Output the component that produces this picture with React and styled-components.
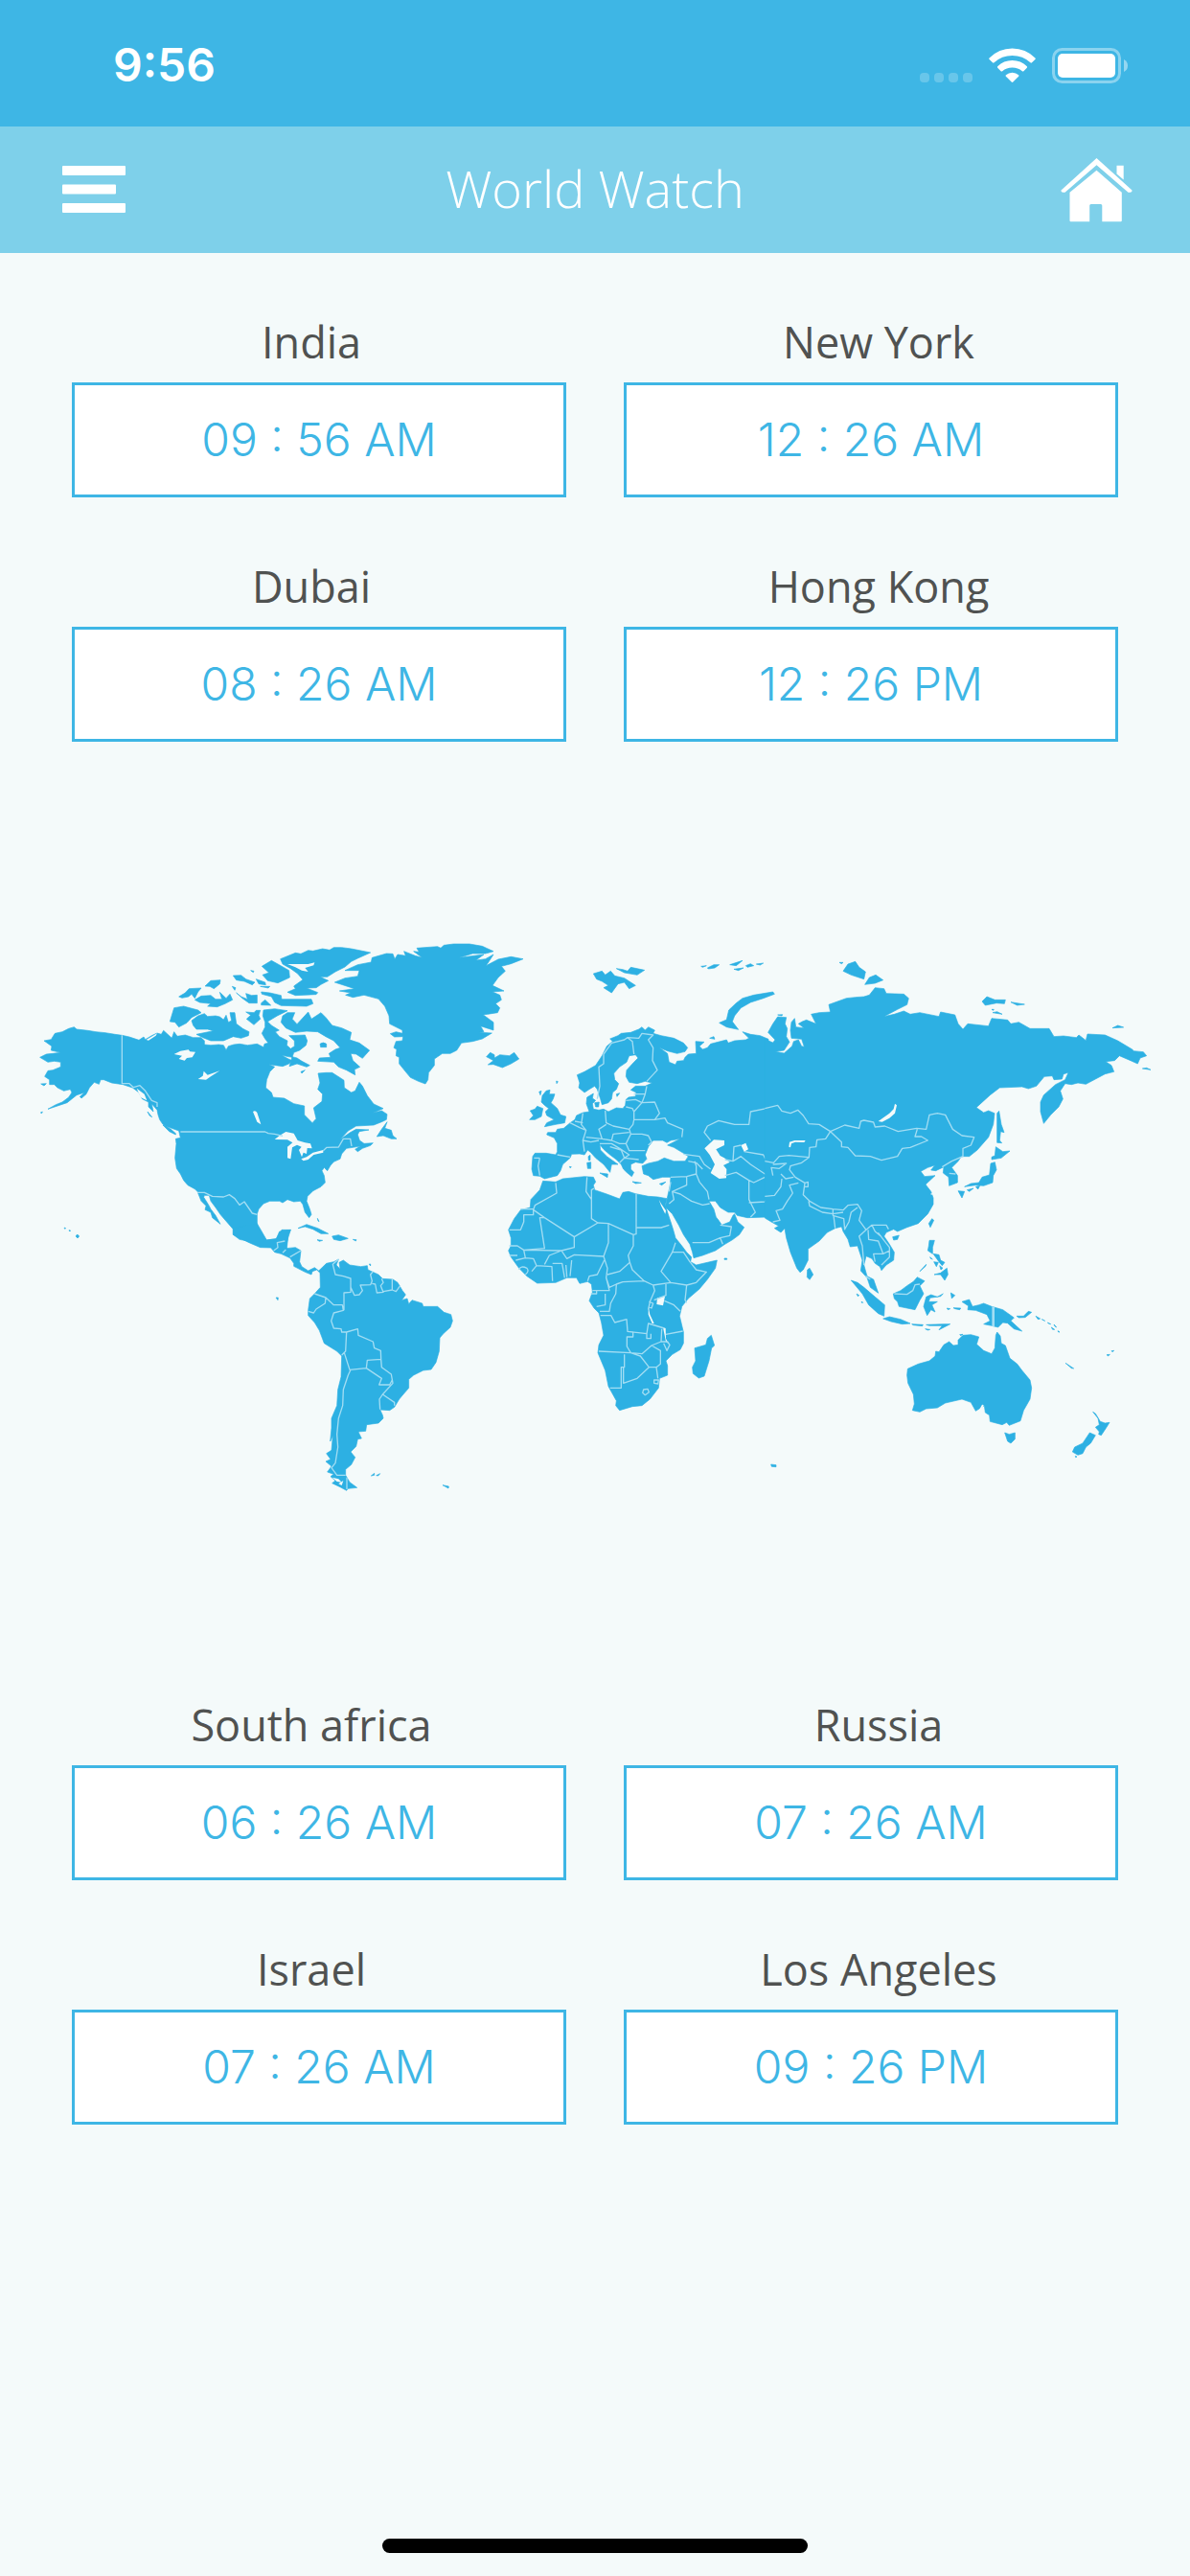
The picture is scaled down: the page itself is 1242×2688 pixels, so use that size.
import React from "react";
import styled, { createGlobalStyle } from "styled-components";

const GlobalStyle = createGlobalStyle`
  * {
    box-sizing: border-box;
  }
  body {
    margin: 0;
    background: #f4fafa;
    font-family: "Open Sans", "Noto Sans", sans-serif;
  }
`;

const StPage = styled.div`
  min-height: 100vh;
  display: flex;
  flex-direction: column;
  background: #f4fafa;
`;

const StStatusBar = styled.div`
  height: 132px;
  padding: 4px 65px 0 118px;
  display: flex;
  align-items: center;
  justify-content: space-between;
  background: #3eb6e5;
  color: #fff;
`;

const StStatusTime = styled.span`
  font-family: "Inter", sans-serif;
  font-size: 48px;
  font-weight: 600;
  line-height: 60px;
`;

const StStatusIcons = styled.div`
  display: flex;
  align-items: center;
  gap: 17px;
`;

const StHeader = styled.header`
  height: 132px;
  padding: 0 60px;
  display: grid;
  grid-template-columns: 75px 1fr 75px;
  align-items: center;
  background: #7ed0ea;
  color: #fff;
`;

const StTitle = styled.h1`
  margin: 0;
  padding-bottom: 4px;
  text-align: center;
  font-size: 54px;
  font-weight: 300;
  line-height: 60px;
`;

const StMenuButton = styled.button`
  padding: 0 0 0 5px;
  border: 0;
  background: none;
  display: flex;
  cursor: pointer;
`;

const StHomeLink = styled.a`
  display: flex;
`;

const StClocks = styled.section`
  padding: 0 75px;
  display: grid;
  grid-template-columns: 1fr 1fr;
  gap: 63px 60px;
`;

const StClock = styled.div`
  display: flex;
  flex-direction: column;
  gap: 12px;
`;

const StCity = styled.h2`
  margin: 0;
  padding: ${({ $side }) => ($side === "left" ? "0 16px 0 0" : "0 0 0 16px")};
  text-align: center;
  color: #505251;
  font-size: 45px;
  font-weight: 400;
  line-height: 60px;
`;

const StTime = styled.time`
  height: 120px;
  display: flex;
  align-items: center;
  justify-content: center;
  border: 3px solid #3eb6e5;
  background: #fff;
  color: #3eb6e5;
  font-family: "Inter", sans-serif;
  font-size: 48px;
  font-weight: 300;
  line-height: 60px;
`;

const StMain = styled.main`
  padding-top: 63px;
`;

const StMap = styled.svg`
  display: block;
  width: 100%;
  height: auto;
  margin: 186px 0 190px;
`;

const StFooter = styled.footer`
  margin-top: auto;
  padding-bottom: 24px;
  display: flex;
  justify-content: center;
`;

const StHomeBar = styled.div`
  width: 444px;
  height: 15px;
  border-radius: 8px;
  background: #000;
`;

const topClocks = [
  { city: "India", time: "09 : 56 AM" },
  { city: "New York", time: "12 : 26 AM" },
  { city: "Dubai", time: "08 : 26 AM" },
  { city: "Hong Kong", time: "12 : 26 PM" },
];

const bottomClocks = [
  { city: "South africa", time: "06 : 26 AM" },
  { city: "Russia", time: "07 : 26 AM" },
  { city: "Israel", time: "07 : 26 AM" },
  { city: "Los Angeles", time: "09 : 26 PM" },
];

// every region has its own origin; land is filled, water is cut out, borders are stroked
const regions = [
  {
    name: "north america",
    x: 60,
    y: 0,
    land: [
      "M78 378L100 374 112 355 135 350 155 340 172 335 180 342 215 346 240 350 270 353 300 358 322 361 345 366 375 376 390 366 395 374 415 362 432 354 445 358 452 346 465 358 478 370 485 350 495 364 520 360 545 368 570 368 580 378 580 390 600 392 625 390 640 392 648 407 655 395 672 390 690 388 715 392 745 388 765 398 768 388 780 385 770 372 760 355 770 335 770 320 763 300 765 282 800 278 840 284 808 300 778 318 790 330 814 345 802 350 815 365 840 378 838 392 850 403 862 395 862 378 845 362 895 360 902 378 898 392 878 408 860 415 855 430 822 424 845 436 855 440 845 450 825 458 782 452 800 460 785 475 775 500 772 525 790 540 795 555 830 558 860 575 893 582 893 610 918 635 930 622 922 588 948 568 950 545 935 530 942 510 936 480 960 478 980 478 1010 497 1017 502 1018 525 1040 540 1052 535 1065 508 1075 520 1090 550 1098 560 1110 576 1140 590 1108 604 1135 597 1152 608 1150 625 1135 632 1110 642 1055 645 1030 660 1005 687 1035 666 1055 655 1095 657 1065 662 1060 672 1066 690 1080 700 1108 698 1100 706 1075 715 1060 725 1052 718 1068 708 1045 712 1025 715 1010 732 1005 748 985 757 975 768 965 785 955 775 948 785 955 800 958 822 945 835 920 848 903 865 900 880 910 905 915 922 908 932 895 915 888 890 880 880 860 882 840 875 825 885 815 880 785 880 765 888 750 905 745 920 745 960 755 985 775 1002 805 998 815 975 850 970 842 985 838 1030 690 1000 670 985 670 968 650 945 630 922 615 900 600 880 595 862 580 862 578 868 592 890 600 905 615 925 630 952 605 932 600 915 582 907 585 895 570 880 558 850 550 842 528 830 515 815 505 795 493 778 488 745 492 700 490 685 505 682 500 660 450 642 470 662 490 672 490 668 475 655 450 640 440 625 435 610 432 595 415 575 420 600 405 585 405 570 385 560 375 540 355 525 325 515 290 510 265 500 255 500 250 514 235 508 220 525 210 545 195 558 190 553 205 540 180 548 150 572 120 582 90 592 115 578 135 570 155 555 165 540 160 530 140 535 120 525 110 515 95 515 95 500 80 490 90 472 105 470 130 460 130 445 110 442 90 445 65 430 85 420 105 418 130 415 100 408 102 395Z",
      "M485 275L515 270 560 282 570 290 540 305 525 322 500 335 488 320 472 318Z",
      "M540 315L560 300 580 293 590 302 615 300 628 303 640 312 648 298 655 320 665 315 660 290 675 290 680 325 700 340 720 350 718 362 695 370 670 365 640 378 600 378 575 368 555 358 608 347 590 342 555 342 545 330Z",
      "M500 240L520 228 532 215 570 213 560 225 550 245 540 232 530 240 510 244Z",
      "M550 250L570 238 600 236 615 248 635 248 628 226 648 245 660 232 668 250 645 262 620 272 590 270 600 262 565 258Z",
      "M582 207L600 190 630 188 628 200 610 215 597 208Z",
      "M680 228L695 240 715 248 710 230 728 236 745 235 745 260 720 260 700 246Z",
      "M670 174L695 173 710 185 738 195 730 203 705 192 680 188ZM742 185L770 195 772 203 750 200ZM725 158L735 160 733 164ZM667 208L678 212 675 220Z",
      "M710 288L735 290 742 283 755 283 750 298 755 310 735 328 712 310 725 298ZM758 260L770 250 788 267 758 266ZM755 208L785 208 780 213Z",
      "M758 225L785 228 820 236 822 248 915 248 920 262 900 270 820 268 800 258 790 240 760 232Z",
      "M68 513L85 512 78 519ZM402 600L416 617 408 612ZM67 603L73 600 71 605Z",
      "M182 984L188 990 183 996 177 990ZM141 963L146 965 143 967ZM156 971L161 972 158 975Z",
    ],
    sea: [
      "M485 420L505 410 530 406 535 412 552 413 542 430 525 432 518 440 500 435 510 425Z",
      "M560 498L575 488 578 473 590 485 628 472 600 490 585 500Z",
      "M732 600Q740 595 745 603L757 640 745 632Z",
      "M800 687L815 675 835 663 860 668 872 690 895 697 912 700 917 715 902 714 900 732 890 728 885 742 876 720 884 710 870 704 855 712 850 748 840 745 840 710 856 697 840 688Z",
      "M883 748L900 742 920 728 952 720 952 728 922 735 905 750 890 754Z",
      "M368 527L392 545 400 565 380 555ZM398 375L432 355 428 362 405 377ZM640 380L665 373 665 378 645 386Z",
    ],
    borders: [
      "M322 361V512L345 512 358 524 378 518 395 535 415 565 432 572V585M505 663H770L780 668 800 670 825 676M952 722L963 712 1000 711 1015 685 1037 685 1041 708",
      "M558 853L580 853 605 865 640 867 658 860 675 872 690 892 705 882 730 918 745 922",
    ],
  },
  {
    name: "arctic and greenland",
    x: 720,
    y: 0,
    land: [
      "M158 122L205 103 222 106 245 95 260 97 290 90 312 94 325 86 350 86 380 90 440 102 400 120 380 130 360 147 330 162 305 178 282 178 308 190 285 202 270 212 240 213 275 227 270 233 205 236 180 226 205 215 200 207 228 187 212 168 190 152 165 138Z",
      "M100 145L130 127 150 138 185 158 187 180 150 197 118 190 102 172 122 165Z",
      "M160 320L165 300 180 290 203 290 195 310 210 326 245 288 255 310 285 290 300 305 320 330 350 338 380 352 375 375 405 385 437 408 415 433 395 420 378 418 385 440 407 460 390 468 392 485 365 470 340 460 325 445 275 442 280 432 315 430 310 418 330 405 345 400 325 378 300 365 275 350 240 348 205 352 175 338Z",
      "M186 458L195 428 210 432 225 442 250 455 240 460 210 450ZM282 388Q292 380 302 388V398H284ZM340 408L358 412 348 418ZM222 475L235 470 225 480Z",
      "M460 678L475 655 492 632 485 652 505 658 510 675 522 685 505 685 480 675Z",
      "M213 965L240 953 275 965 308 982 285 982 260 968 235 960ZM320 990L340 986 370 997 345 1004 325 1000ZM385 1000L396 1001 394 1005ZM273 1001L290 1003 280 1006ZM274 934L279 944 276 942Z",
      "M328 195L360 182 400 176 405 158 360 158 400 140 442 132 445 118 490 105 510 106 516 122 525 108 550 112 545 98 580 112 602 118 575 98 592 100 585 88 650 83 660 88 670 79 700 75 750 75 790 82 825 98 800 105 760 105 718 118 795 108 770 126 800 122 825 108 802 143 840 123 880 115 918 122 880 137 850 145 862 160 840 180 822 205 858 222 822 225 845 235 850 250 832 262 845 275 838 290 793 297 825 320 825 345 785 332 795 350 780 352 820 354 790 372 760 380 725 385 710 408 690 418 665 418 640 435 640 455 622 478 620 500 612 513 590 505 565 493 550 475 530 450 530 430 520 425 522 405 513 400 520 380 540 378 542 365 515 366 502 356 520 350 540 355 540 345 500 325 498 300 485 270 465 247 420 235 385 242 362 235 378 228 343 222 390 215Z",
      "M803 428L815 415 828 422 828 432 845 422 875 425 890 415 905 435 880 450 853 462 825 452 808 453 825 440Z",
    ],
    sea: ["M180 138L245 138 265 133 262 142 235 150 245 162 225 158 205 148Z"],
    borders: [],
  },
  {
    name: "south america",
    x: 720,
    y: 960,
    land: [
      "M10 5L85 -10 115 42 145 38 155 22 162 10 190 10 182 35 175 68 205 65 222 75 218 110 225 125 245 138 265 128 278 138 302 115 325 110 340 102 333 120 345 133 342 112 355 105 375 120 410 125 430 122 432 135 465 150 478 163 510 165 525 175 540 200 550 213 538 230 555 225 560 242 570 230 602 240 605 250 650 250 670 268 692 275 697 295 690 315 668 335 657 348 655 390 645 425 630 447 605 450 575 465 560 478 560 505 540 528 530 540 515 565 500 575 470 573 478 590 480 600 465 615 428 620 425 640 402 642 412 663 400 665 395 688 378 705 392 722 380 745 362 760 362 778 375 800 398 817 370 820 365 826 345 815 320 803 330 795 315 782 325 775 305 768 318 750 300 735 315 728 302 710 318 700 322 655 314 672 318 630 318 600 335 560 338 510 348 470 350 405 335 390 295 365 280 325 265 300 245 278 245 262 250 225 265 210 283 190 282 145 272 135 258 140 255 150 235 142 200 124 200 115 188 98 160 85 140 80 128 66 95 65 60 50 30 35 10 25Z",
      "M442 780L452 772 452 778ZM458 779L470 773 464 780ZM666 809L685 813 684 819ZM144 222L151 222 150 230ZM436 117L440 117 440 123Z",
    ],
    sea: ["M320 785L340 790 350 800 335 798ZM340 805L355 795 350 810Z"],
    borders: [
      "M137 75L150 65 148 50 172 45M165 82L175 72M188 95L222 75",
      "M340 102L322 118 330 150 355 155 378 162 378 205 357 207 357 262M378 190L390 215 405 213 415 200 408 183 440 182 445 170 440 150 448 140M475 163L480 175 472 185 480 205 460 207 455 180 445 178M508 165V198L480 203M508 198L520 203 533 185",
      "M265 210L300 222 298 240 270 258 262 270 245 265M300 222L325 245 352 245 355 262 325 270 317 295 325 318 348 320 350 330 365 330 362 390 350 402M365 330L400 320 402 340 448 360 452 380 472 388 473 415 430 418 427 443 375 448 358 395",
      "M473 415L475 440 505 462 510 490 478 525 515 550V560M427 443L475 475 467 495H500L508 480M478 525L468 540 470 572M378 448L370 465 355 510 353 560 340 600 335 650 338 690 330 740 318 755 335 778H362M366 785V822",
    ],
  },
  {
    name: "europe and middle east",
    x: 1500,
    y: 0,
    land: [
      "M168 740L175 730 210 730 240 735 245 725 245 700 235 682 212 672 215 665 240 665 245 655 265 652 285 635 300 625 305 612 325 603 345 600 336 575 338 555 358 543 355 558 365 565 355 575 358 592 375 595 390 592 405 600 430 588 450 590 458 580 460 562 468 555 490 552 492 540 475 532 490 520 520 520 542 510 520 505 495 512 470 508 460 490 462 470 485 445 498 432 490 422 470 425 462 445 440 460 422 480 425 500 437 512 430 530 418 540 415 560 405 572 385 578 380 560 370 530 362 520 345 530 330 540 312 525 315 510 307 485 330 475 365 455 385 425 400 395 418 380 410 372 435 362 445 355 475 352 500 342 510 335 520 345 530 335 550 345 545 355 570 362 610 370 640 385 653 400 645 412 620 418 590 410 565 400 590 418 595 445 615 453 620 442 640 440 645 430 655 420 680 418 678 380 705 382 690 395 700 405 715 400 725 388 775 375 780 385 800 378 835 375 845 370 825 350 850 358 880 362 906 373V935L900 930 840 932 808 925 800 915 780 915 755 900 740 880 720 880 735 905 742 930 750 940 760 955 785 945 795 925 800 920 810 945 830 962 815 985 795 1000 770 1015 740 1035 700 1050 672 1058 668 1040 660 1015 640 985 625 955 605 920 583 898 588 875 598 830 600 805 575 805 545 812 530 800 515 795 510 770 530 762 560 755 580 745 610 755 645 755 655 740 640 730 610 712 590 705 630 685 600 690 588 697 575 690 545 690 530 710 520 735 525 748 512 762 490 758 475 765 475 780 485 790 478 803 462 790 452 780 445 765 430 750 410 735 390 718 378 703 380 720 400 740 435 765 415 765 410 790 390 765 365 745 350 728 340 720 330 735 315 732 290 733 285 745 262 765 255 785 245 800 205 810 190 802 170 800 165 780Z",
      "M205 647L212 635 235 625 212 612 208 600 218 590 205 580 195 570 198 550 210 535 222 532 220 545 237 545 232 560 225 572 245 590 255 610 272 615 268 635 240 640Z",
      "M158 625L170 612 160 597 175 592 182 583 200 590 195 615 175 625ZM188 538L195 535 192 548ZM242 504L247 506 243 512Z",
      "M362 572L376 570 374 585 365 585ZM430 545L440 542 432 553ZM378 792L403 795 402 806ZM338 760L350 758 350 778 340 778ZM342 740L348 736 348 752 343 752ZM480 819L508 823 490 825ZM565 826L585 820 572 830ZM283 772L289 773 285 776Z",
      "M358 168L385 160 395 172 412 160 425 175 455 182 490 205 470 215 455 195 435 200 415 228 390 212 405 205 385 192 368 185ZM430 152L450 155 465 160 475 148 518 157 495 172 455 165Z",
      "M752 322L775 312 782 282 805 260 825 245 860 235 920 225 925 232 890 245 850 258 820 275 800 300 793 318 812 343 775 335Z",
      "M695 145L712 143 700 148ZM715 150L735 140 752 140 738 150 718 153ZM785 140L825 127 805 143ZM798 154L828 150 812 158ZM835 143L850 137 860 143 840 148ZM868 138L890 135 880 141ZM722 370L735 365 738 373Z",
    ],
    sea: [
      "M706 715L735 688 768 690 768 705 742 718 755 738 768 745 785 758 765 768 775 780 774 808 752 810 725 792 738 765 722 735Z",
      "M820 705L835 698 843 718 830 725Z",
    ],
    borders: [
      "M370 560L378 520 375 460 390 450 390 420 415 385 455 375 465 368 480 380 485 420M465 368L500 370 510 355 545 360 530 375 545 400 543 440 558 470 525 505",
      "M485 545H520L525 520M460 565L490 562 510 572 520 545M460 585L480 590 485 600 510 572 550 570 565 605 550 625 485 625V600M395 597L398 635 420 645 470 655 482 640 485 625M550 625L582 620 590 635 638 655 635 680M470 655L475 670 510 670 530 675 540 695 530 705",
      "M325 605L320 640 335 658 325 690 350 695 375 690M285 635L315 650 335 658M335 680L385 685 375 655 398 640M385 685L415 690 420 670 470 665M415 690L440 700 460 700 475 670M378 700L415 700 440 715 470 735 455 745 445 720 410 710M440 760L455 745 500 750M460 700L470 722 520 722M245 735L285 742M190 745L185 770 190 800M172 745H190M325 690L330 725M300 630L325 635",
      "M600 805L650 803 680 795V770L675 755M640 733L690 740 705 765 725 780M655 755L680 760 700 780M680 795L690 820 715 850 720 875M650 803V830L605 850 610 875 595 888M605 850L630 858 665 880 700 892 722 888M600 820L595 850M668 1010L720 1010 755 995 785 988 790 960 755 955M755 995L763 1015",
      "M725 690L705 665 715 645 750 628 800 640 845 640 850 600 900 590M795 755L798 710 820 705M770 750L795 755 820 740 850 765 895 795 915 798M830 725L890 735 900 755M770 800L805 790 845 815V875L865 915 850 930M845 815L860 822 895 805M845 885L895 882 905 865",
    ],
  },
  {
    name: "africa",
    x: 1500,
    y: 720,
    land: [
      "M200 97L240 100 262 90 330 83 358 85 365 100 358 110 362 125 400 138 440 153 450 133 468 130 490 137 530 145 560 147 588 152 583 172 590 195 600 225 608 250 615 275 635 300 650 320 665 335 662 350 680 360 745 345 740 370 715 405 690 435 655 465 635 490 628 520 640 570 640 605 630 625 605 640 585 660 590 675 590 705 565 715 562 745 535 780 510 800 480 803 440 815 428 800 430 785 405 740 395 690 372 635 375 610 390 580 383 540 375 510 360 495 345 472 355 445 352 420 340 412 315 418 305 400 275 400 240 415 182 417 150 395 125 370 100 335 92 315 100 300 100 275 92 250 110 215 130 188 160 180 162 155 190 125Z",
      "M675 620L710 610 715 590 727 580 737 612 728 620 720 660 705 708 688 714 670 700 668 680 678 660Z",
      "M914 984L930 986 930 992 916 991ZM768 339H776V343H768Z",
    ],
    sea: [
      "M563 155L570 168 585 190 583 200 570 175Z",
      "M558 463L582 458 576 487 556 483Z",
      "M530 490L535 515 548 543 542 543 530 515ZM576 556L584 558 585 590 592 605 585 600Z",
    ],
    borders: [
      "M240 103L243 135 175 173 170 187 205 212 298 272 372 228 352 215 352 155 335 130 338 85M352 155V125L360 120M130 185H170M170 187V203H140V225L130 250H95M205 212H190L205 308 140 313M298 272L298 305 258 315 220 330 205 358",
      "M95 300L120 300 140 313 145 338 170 340 180 362M140 313L258 315 275 340 298 328 390 333 405 290 405 230 372 228M405 230L483 265 492 263V138M492 243H570L595 235M483 265L483 300 467 330 472 352 440 380 402 390M390 333L402 370 398 400 408 430 430 420 450 413 517 410 480 375 472 352",
      "M115 345L145 338M125 375Q130 360 150 370 158 380 145 390M165 380L180 362 228 365 230 410M230 355H260L268 400M272 360L275 398M290 345L285 395M340 410L345 395 370 390 392 345M355 440H408L398 400M350 450H368V440M368 490L395 485V450M378 505L408 505 412 480 428 450 430 420",
      "M615 290L605 320 570 380 600 415 650 423 680 415 712 382 680 375 660 350 640 320 605 320M517 410L545 423 600 415M545 423L550 440 535 475 530 500M585 420L585 455 548 470M580 472L610 485 630 505M650 423L645 470 650 478",
      "M380 518H413L425 540 462 530 465 568 525 575 530 543 580 558M465 568L482 570V585H463V615L475 635 375 630M525 575L525 590H538V575M475 635L510 638 540 612 570 600 572 560M585 577L638 567M540 612L568 628V670L555 680 532 680 505 645 475 635M455 640V680H445V745L410 745M532 680L495 715 452 730V680M555 680L560 715M515 750L528 748 532 758 520 767 512 760ZM548 720L562 720 560 732 548 730ZM570 600L590 600 597 610 588 628 578 605",
      "M532 475L545 480 540 495 530 490M95 330H120",
    ],
  },
  {
    name: "asia",
    x: 2400,
    y: 0,
    land: [
      "M-5 373L20 384 27 375 5 352 20 325 35 303 62 305 58 325 65 340 62 365 72 382 55 408 28 412 55 417 80 395 85 380 100 375 110 395 118 397 110 373 78 370 75 345 78 320 88 308 92 335 118 338 100 325 112 318 125 313 155 325 140 295 165 290 200 288 195 265 250 245 278 242 305 240 322 235 340 212 368 215 375 230 430 232 445 245 440 265 410 280 368 302 400 295 430 285 450 295 480 290 540 302 545 288 590 297 600 325 615 342 630 325 695 332 705 308 755 313 765 325 790 320 825 340 885 340 900 365 930 363 970 368 978 360 1000 377 1005 357 1060 360 1100 378 1145 405 1150 410 1180 413 1190 425 1170 432 1162 450 1140 440 1105 425 1090 440 1062 443 1080 455 1088 475 1060 482 1000 514 975 510 955 515 935 512 920 535 928 560 915 585 890 610 868 637 858 600 858 570 868 548 905 515 935 500 945 478 930 482 925 498 900 500 895 488 870 490 845 520 820 528 800 522 730 525 700 548 657 587 680 603 695 597 714 605 710 640 695 680 660 720 635 740 610 740 600 755 580 775 598 800 598 822 572 832 570 805 553 792 555 773 530 785 515 783 527 768 505 775 483 787 495 803 528 800 498 828 515 850 522 870 522 890 505 920 475 950 440 962 410 975 398 968 375 978 368 990 385 1015 400 1040 398 1065 375 1080 360 1097 355 1085 340 1075 330 1060 312 1052 305 1080 315 1115 335 1125 350 1168 325 1150 315 1120 295 1098 300 1065 285 1020 262 1023 255 1000 240 975 235 960 215 965 190 978 165 1005 130 1030 130 1065 115 1095 105 1103 95 1090 75 1040 62 995 57 965 45 978 25 965 38 958 15 945 -5 933Z",
      "M240 160L255 138 278 130 290 148 310 162 305 185 265 172ZM308 202L322 180 342 172 365 188 340 198ZM228 133L240 133 235 137Z",
      "M675 255L690 240 715 250 748 250 745 262 720 260 685 267ZM765 257L808 264 785 267ZM708 290L722 287 738 295ZM1083 338L1100 330 1118 336ZM1177 465L1190 463 1203 469ZM35 297L50 296 48 300ZM705 280L712 280 710 283Z",
      "M722 605L728 598 735 640 744 665 733 662 730 690 737 698 722 697Z",
      "M718 710L740 725 762 723 735 745 705 750 705 742 715 738Z",
      "M702 762L715 758 720 782 710 800 708 822 680 832 655 830 620 835 640 825 665 822 675 805 698 798ZM628 845L648 840 635 850ZM600 848L620 850 612 870ZM655 835L668 832 662 843Z",
      "M508 950L518 935 524 940 513 962ZM395 992L415 987 410 1000 398 1002ZM128 1095L135 1090 146 1110 135 1126 127 1118Z",
    ],
    sea: [
      "M350 630L385 605 398 592 402 575 408 580 402 605 385 620 362 632Z",
      "M70 710L72 695 88 690 122 690 118 696 90 695 78 700 75 712Z",
      "M515 855L525 858 515 860Z",
    ],
    borders: [
      "M-5 590L35 580 48 598 75 605 98 595 115 612 132 638 165 640 200 662 245 642 290 652 295 630 305 627 335 633 340 648 370 645 412 662 470 652 500 655 510 610 535 605 560 610 583 655 612 675 650 680 640 705 615 715V740L580 755 550 773",
      "M200 662L235 695 235 710 255 712 278 738 325 740 360 752 410 740 425 715 450 712 505 690 485 678 465 678 472 655M200 662L185 685 158 688 155 710 135 712 133 743 70 737 40 740 22 760 -5 755",
      "M133 743L110 760 75 770 72 782 90 805 120 823 115 860 135 880 170 900 208 905 240 908 255 893 285 890 298 910 290 940 312 970 330 955 375 955 382 968M20 765L62 762 40 778 15 775 20 800M45 795L60 810 85 805M132 880L135 895 175 915 208 920 240 915M208 905V925L242 935 245 970M210 925L215 965M285 900L265 915 258 945 245 968",
      "M120 823L130 820 130 835 118 835M100 823L72 830 82 855 65 880 50 905 30 910 42 940 20 945M-5 865L25 862 45 835 48 810M312 970L290 990 300 1020 305 1080M318 970L320 1000 350 1005 365 1045H335L340 1070M330 955L340 975 358 990 350 980 385 1025 385 1055 360 1080M365 1045L385 1035M310 1115L325 1125M572 793L592 795",
    ],
  },
  {
    name: "oceania",
    x: 2400,
    y: 720,
    land: [
      "M265 408L285 415 305 430 340 460 370 485 368 520 350 512 320 485 300 450ZM365 528L385 522 420 530 450 543 425 545 390 537ZM455 545L490 547 488 551 460 548ZM500 547L555 545 575 545 540 563 550 550 510 550ZM497 560L512 562 505 564Z",
      "M397 450L420 440 440 425 460 412 472 398 495 410 480 425 492 450 480 470 465 500 415 490 410 475 400 465Z",
      "M492 490L500 460 515 453 535 460 553 450 545 458 512 463 508 475 535 475 518 485 528 507 515 500 503 518Z",
      "M510 283H526L520 305 520 325 505 315 508 300ZM522 325L540 328 545 345 558 352 550 362 540 350ZM525 390L545 385 565 370 568 390 558 408 545 390ZM524 350L538 352 532 365ZM480 380L500 358 498 364ZM512 335L520 342 514 340ZM542 362L552 370 546 375Z",
      "M577 447L590 455 580 465ZM565 495L575 497 568 500ZM585 494L608 495 605 500 590 497ZM282 450L290 455 286 458ZM298 474L302 478H298Z",
      "M612 475L635 468 645 490 665 485 680 480 705 490 740 500 775 525 765 535 800 567 775 560 755 542 740 540 725 555 705 550 680 545 700 535 690 515 655 502 630 500 632 488Z",
      "M783 520L805 520 820 505 830 508 810 524 790 525ZM843 520L857 528 850 530ZM862 530L872 535ZM880 540L890 545 884 544ZM892 555L902 562 896 562ZM900 546L908 555 903 552ZM912 566L918 570 914 570Z",
      "M442 685L475 670 510 660 528 645 530 630 540 632 555 610 572 600 585 612 600 610 600 595 615 580 640 578 665 585 658 608 680 628 705 638 715 620 718 580 722 570 732 582 735 605 748 612 762 652 785 670 800 690 825 720 830 745 825 780 805 815 795 848 760 862 752 853 738 860 700 850 698 830 685 822 682 800 655 817 640 790 612 780 560 792 535 807 500 810 480 820 457 815 463 795 460 765 443 730 440 705Z",
      "M746 885L760 890 778 885 778 905 765 918 755 912ZM605 578L615 577 608 581Z",
      "M1022 820L1030 825 1045 850 1060 855 1074 853 1062 872 1048 893 1040 890 1042 882 1030 868 1042 860 1038 840ZM1012 885L1030 893 1015 918 1000 930 990 950 975 955 958 945 965 930 990 918Z",
      "M936 667L962 684 955 683ZM1065 641L1075 640 1070 645ZM1080 629L1088 628 1083 632ZM967 958L972 960 968 962Z",
    ],
    sea: ["M665 815L675 797 680 798 672 820ZM668 828L682 826 678 832Z"],
    borders: ["M708 490V552M712 491V552M400 450L440 452 458 440 465 422 480 420"],
  },
];

function WorldMap() {
  return (
    <StMap viewBox="0 0 3726 1860" role="img" aria-label="World map">
      {regions.map((region) => {
        return (
          <g
            key={region.name}
            transform={`translate(${region.x} ${region.y})`}
            strokeLinejoin="round"
          >
            <path
              d={region.land.join("")}
              fill="#2db0e3"
              stroke="#2db0e3"
              strokeWidth="2"
            />
            <path d={region.sea.join("")} fill="#f4fafa" />
            <path
              d={region.borders.join("")}
              fill="none"
              stroke="#a2ddf3"
              strokeWidth="4"
            />
          </g>
        );
      })}
    </StMap>
  );
}

function Clocks({ list }) {
  return (
    <StClocks>
      {list.map((element, index) => {
        return (
          <StClock key={element.city}>
            <StCity $side={index % 2 === 0 ? "left" : "right"}>
              {element.city}
            </StCity>
            <StTime>{element.time}</StTime>
          </StClock>
        );
      })}
    </StClocks>
  );
}

function StatusBar() {
  return (
    <StStatusBar>
      <StStatusTime>9:56</StStatusTime>
      <StStatusIcons>
        <svg width="55" height="37" fill="#fff" fillOpacity="0.22">
          <rect x="0" y="26" width="10" height="10" rx="4" />
          <rect x="15" y="26" width="10" height="10" rx="4" />
          <rect x="30" y="26" width="10" height="10" rx="4" />
          <rect x="45" y="26" width="10" height="10" rx="4" />
        </svg>
        <svg width="49" height="37" fill="#fff">
          <path d="M.6 10.4Q10.5 .4 24.5 .4T48.4 10.4Q49.2 11.2 48.4 12L45 15.3Q44.2 16 43.4 15.3 35.5 8 24.5 8T5.6 15.3Q4.8 16 4 15.3L.6 12Q-.2 11.2 .6 10.4Z" />
          <path d="M9.2 19.2Q15.5 13 24.5 13T39.8 19.2Q40.5 20 39.8 20.8L36.4 24.2Q35.6 24.9 34.8 24.2 30.5 20.5 24.5 20.5T14.2 24.2Q13.4 24.9 12.6 24.2L9.2 20.8Q8.5 20 9.2 19.2Z" />
          <path d="M17.9 28.2Q20.7 25.7 24.5 25.7T31.1 28.2Q31.9 29 31.1 29.8L25.3 35.6Q24.5 36.3 23.7 35.6L17.9 29.8Q17.1 29 17.9 28.2Z" />
        </svg>
        <svg width="79" height="37" fill="#fff">
          <rect
            x="1.5"
            y="1.5"
            width="69"
            height="34"
            rx="9"
            fill="none"
            stroke="#fff"
            strokeOpacity="0.4"
            strokeWidth="3"
          />
          <rect x="6" y="6" width="60" height="25" rx="5" />
          <path d="M75 12Q79 14 79 18.5T75 25Z" fillOpacity="0.45" />
        </svg>
      </StStatusIcons>
    </StStatusBar>
  );
}

export default function App() {
  return (
    <StPage>
      <GlobalStyle />
      <StatusBar />
      <StHeader>
        <StMenuButton type="button" aria-label="Menu">
          <svg width="66" height="50" fill="#fff">
            <rect x="0" y="0" width="66" height="10" rx="1" />
            <rect x="0" y="19.5" width="56" height="10" rx="1" />
            <rect x="0" y="39" width="66" height="10" rx="1" />
          </svg>
        </StMenuButton>
        <StTitle>World Watch</StTitle>
        <StHomeLink href="#home" aria-label="Home">
          <svg width="75" height="67" fill="#fff">
            <path d="M37.5 0L74.5 33.5Q75 36 70.5 35.8L37.5 7.2 4.5 35.8Q0 36 .5 33.5Z" />
            <path d="M58.5 7.7H65.7V22.5L58.5 16.5Z" />
            <path d="M37.5 12.7L63.8 35.7V65.3Q63.8 66.3 62.8 66.3H43.3V49.5Q43.3 48 41.8 48H31.7Q30.2 48 30.2 49.5V66.3H10.5Q9.5 66.3 9.5 65.3V35.7Z" />
          </svg>
        </StHomeLink>
      </StHeader>
      <StMain>
        <Clocks list={topClocks} />
        <WorldMap />
        <Clocks list={bottomClocks} />
      </StMain>
      <StFooter>
        <StHomeBar />
      </StFooter>
    </StPage>
  );
}
